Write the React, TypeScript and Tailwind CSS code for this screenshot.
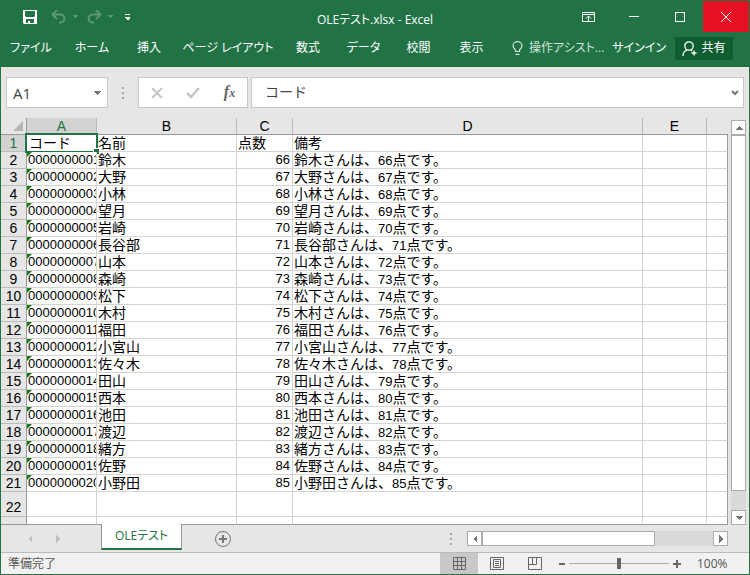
import React from 'react';

const ribbonTabs = [
  { label: 'ファイル', width: 'w-[60px]' },
  { label: 'ホーム', width: 'w-[62px]' },
  { label: '挿入', width: 'w-[52px]' },
  { label: 'ページ レイアウト', width: 'w-[106px]' },
  { label: '数式', width: 'w-[54px]' },
  { label: 'データ', width: 'w-[57px]' },
  { label: '校閲', width: 'w-[53px]' },
  { label: '表示', width: 'w-[53px]' },
];

const names = [
  '鈴木', '大野', '小林', '望月', '岩崎', '長谷部', '山本', '森崎', '松下', '木村',
  '福田', '小宮山', '佐々木', '田山', '西本', '池田', '渡辺', '緒方', '佐野', '小野田',
];

const people = names.map((name, index) => ({
  code: String(index + 1).padStart(10, '0'),
  name,
  score: 66 + index,
}));

const columns = ['A', 'B', 'C', 'D', 'E', ''];

const Triangle: React.FC<{ points: string; className?: string }> = ({ points, className = 'fill-[#777]' }) => (
  <svg width="8" height="8" viewBox="0 0 8 8" className={className} shapeRendering="crispEdges">
    <polygon points={points} />
  </svg>
);

const UP = '4,2 8,6 0,6';
const DOWN = '0,2 8,2 4,6';
const LEFT = '6,0 6,8 2,4';
const RIGHT = '2,0 2,8 6,4';
const SMALL_DOWN = '0,2 6,2 3,5';

const Dots: React.FC = () => (
  <div className="flex flex-col gap-[3px]">
    <span className="size-[2px] bg-[#a6a6a6]" />
    <span className="size-[2px] bg-[#a6a6a6]" />
    <span className="size-[2px] bg-[#a6a6a6]" />
  </div>
);

const QuickAccess: React.FC = () => (
  <div className="flex items-center pl-[22px] text-white">
    <button aria-label="上書き保存" className="mr-[14px]">
      <svg width="14" height="14" viewBox="0 0 14 14" fill="currentColor" fillRule="evenodd">
        <path d="M0 0h14v14H1l-1-1zM2 1V6l1 1h8l1-1V1zM3 9v4h2v-2h2v2h4V9z" />
      </svg>
    </button>
    <button aria-label="元に戻す" className="flex items-center gap-[5px] text-[#5c9776]">
      <svg width="16" height="14" viewBox="0 0 16 14" fill="none" stroke="currentColor" strokeWidth="2">
        <path d="M6 0L1.500 4.500 6 9M2 4.500h7.500a4 4 0 0 1 0 8H8" />
      </svg>
      <Triangle points={SMALL_DOWN} className="fill-current" />
    </button>
    <button aria-label="やり直し" className="ml-[6px] flex items-center gap-[5px] text-[#5c9776]">
      <svg width="16" height="14" viewBox="0 0 16 14" fill="none" stroke="currentColor" strokeWidth="2">
        <path d="M10 0l4.500 4.500L10 9M14 4.500H6.500a4 4 0 0 0 0 8H8" />
      </svg>
      <Triangle points={SMALL_DOWN} className="fill-current" />
    </button>
    <button aria-label="クイック アクセス ツール バーのカスタマイズ" className="ml-[10px]">
      <svg width="6" height="8" viewBox="0 0 6 8" fill="currentColor" shapeRendering="crispEdges">
        <path d="M0 1h5v1H0zM0 4h5v1L3 7H2L0 5z" />
      </svg>
    </button>
  </div>
);

const WindowButtons: React.FC = () => (
  <div className="flex justify-end text-white">
    <button aria-label="リボンの表示オプション" className="flex w-[46px] items-center justify-center">
      <svg width="13" height="10" viewBox="0 0 13 10" fill="none" stroke="currentColor">
        <path d="M.5.500h12v9H.5zM.5 2.500h12M6.500 9V4M4 6.500L6.500 4 9 6.500" />
      </svg>
    </button>
    <button aria-label="最小化" className="flex w-[46px] items-center justify-center">
      <span className="h-px w-[10px] bg-white" />
    </button>
    <button aria-label="最大化" className="flex w-[46px] items-center justify-center">
      <span className="size-[10px] border border-white" />
    </button>
    <button aria-label="閉じる" className="flex w-[46px] items-center justify-center bg-[#e81123]">
      <svg width="10" height="10" viewBox="0 0 10 10" stroke="currentColor">
        <path d="M0 0l10 10M10 0L0 10" />
      </svg>
    </button>
  </div>
);

const Ribbon: React.FC = () => (
  <header className="bg-[#217346] text-[12px] text-white">
    <div className="grid h-[31px] grid-cols-[1fr_auto_1fr]">
      <QuickAccess />
      <h1 className="self-center pt-[6px] leading-4">OLEテスト.xlsx - Excel</h1>
      <WindowButtons />
    </div>
    <div className="flex h-[35px] items-center pb-[3px] whitespace-nowrap">
      <nav className="flex">
        {ribbonTabs.map((tab) => (
          <button key={tab.label} className={`${tab.width} text-center`}>
            {tab.label}
          </button>
        ))}
      </nav>
      <button className="ml-[14px] flex items-center gap-[6px] text-[#d3e3da]">
        <svg width="11" height="14" viewBox="0 0 11 14" fill="none" stroke="currentColor" strokeWidth="1.200">
          <path d="M3.500 10.500V9C2.500 8 1 6.500 1 4.800a4.500 4.200 0 0 1 9 0C10 6.500 8.500 8 7.500 9v1.500zM3.500 13.400h4" />
        </svg>
        操作アシスト...
      </button>
      <button className="ml-auto">サインイン</button>
      <button className="mr-4 ml-[9px] flex h-[23px] w-[58px] items-center justify-center gap-1 bg-[#0e5c2f]">
        <svg width="15" height="15" viewBox="0 0 15 15" fill="none" stroke="currentColor" strokeWidth="1.300">
          <circle cx="7" cy="5" r="4.200" />
          <path d="M1 15c0-3 1.500-5 4-6M9 9l1 1M12 9.500v5M9.500 12h5" />
        </svg>
        共有
      </button>
    </div>
  </header>
);

const FormulaBar: React.FC = () => (
  <div className="flex h-[51px] items-center pr-[5px] pl-[5px] text-[#444]">
    <div className="flex h-[31px] w-[102px] items-center border border-[#c6c6c6] bg-white pr-[6px] pl-[6px]">
      <input
        aria-label="名前ボックス"
        defaultValue="A1"
        className="min-w-0 flex-1 bg-transparent text-[15px] leading-5 outline-none"
      />
      <button aria-label="名前の一覧">
        <Triangle points={DOWN} />
      </button>
    </div>
    <div className="flex w-[30px] justify-center">
      <Dots />
    </div>
    <div className="flex h-[31px] w-[110px] items-center justify-around border border-[#c6c6c6] bg-white">
      <button aria-label="キャンセル">
        <svg width="12" height="12" viewBox="0 0 12 12" stroke="#c6c6c6" strokeWidth="2">
          <path d="M1 1l10 10M11 1L1 11" />
        </svg>
      </button>
      <button aria-label="入力">
        <svg width="14" height="12" viewBox="0 0 14 12" fill="none" stroke="#c6c6c6" strokeWidth="2.500">
          <path d="M1 6l4 4 8-9" />
        </svg>
      </button>
      <button aria-label="関数の挿入" className="font-['Liberation_Serif',serif] text-[16px] leading-5 font-bold italic text-[#666]">
        f<span className="text-[12px]">x</span>
      </button>
    </div>
    <div className="ml-[3px] flex h-[31px] flex-1 items-center border border-[#c6c6c6] bg-white pr-1 pl-[13px]">
      <input
        aria-label="数式バー"
        defaultValue="コード"
        className="min-w-0 flex-1 bg-transparent pb-1 font-['Noto_Sans_CJK_JP',sans-serif] text-[14px] leading-5 outline-none [font-feature-settings:normal]"
      />
      <button aria-label="数式バーの展開">
        <svg width="8" height="6" viewBox="0 0 8 6" fill="none" stroke="#777" strokeWidth="2">
          <path d="M1 1l3 3 3-3" />
        </svg>
      </button>
    </div>
  </div>
);

const cell = 'overflow-hidden border-r border-b border-[#d4d4d4] bg-white p-0';
const rowHead = 'border-r border-b border-r-[#999] border-b-[#bbb] p-0 text-center font-normal';

const EmptyCells: React.FC<{ from?: number }> = ({ from = 0 }) => (
  <>
    {columns.slice(from).map((_, index) => (
      <td key={index} className={`${cell} last:border-r-[#999]`} />
    ))}
  </>
);

const Sheet: React.FC = () => (
  <table className="w-full flex-1 table-fixed border-separate border-spacing-0 font-['Liberation_Sans','Noto_Sans_CJK_JP',sans-serif] text-[14px] leading-4 whitespace-nowrap text-black [font-feature-settings:normal]">
    <colgroup>
      <col className="w-[26px]" />
      <col className="w-[70px]" />
      <col className="w-[140px]" />
      <col className="w-[56px]" />
      <col className="w-[350px]" />
      <col className="w-[64px]" />
      <col />
    </colgroup>
    <thead>
      <tr className="h-[17px]">
        <th className="border-r border-b border-[#999] p-0">
          <svg width="10" height="10" viewBox="0 0 10 10" className="mr-[3px] ml-auto">
            <path d="M10 0v10H0z" fill="#b4b4b4" />
          </svg>
        </th>
        {columns.map((column, index) => (
          <th
            key={index}
            className="border-r border-b border-r-[#bbb] border-b-[#999] p-0 font-normal last:border-r-0 nth-2:bg-[#d2d2d2] nth-2:text-[#217346]"
          >
            {column}
          </th>
        ))}
      </tr>
    </thead>
    <tbody>
      <tr className="h-[17px]">
        <th className={`${rowHead} bg-[#d2d2d2] text-[#217346]`}>1</th>
        <td className="relative border-r border-b border-[#d4d4d4] bg-white p-0 pl-[2px]">
          コード
          <span className="absolute -inset-[2px] border-2 border-[#217346]" />
          <span className="absolute -right-[3px] -bottom-[3px] size-[6px] border-t border-l border-white bg-[#217346]" />
        </td>
        <td className={`${cell} pl-px`}>名前</td>
        <td className={`${cell} pl-px`}>点数</td>
        <td className={`${cell} pl-px`}>備考</td>
        <EmptyCells from={4} />
      </tr>
      {people.map((person, index) => (
        <tr key={person.code} className="h-[17px]">
          <th className={rowHead}>{index + 2}</th>
          <td className={`${cell} relative pl-px text-[13px]`}>
            <span className="absolute top-0 left-0 border-t-[5px] border-r-[5px] border-t-[#107c10] border-r-transparent" />
            {person.code}
          </td>
          <td className={`${cell} pl-px`}>{person.name}</td>
          <td className={`${cell} pr-[2px] text-right text-[13px]`}>{person.score}</td>
          <td className={`${cell} pl-px`}>
            {person.name}さんは、<span className="text-[13px] leading-none">{person.score}</span>点です。
          </td>
          <EmptyCells from={4} />
        </tr>
      ))}
      <tr className="h-[25px]">
        <th className={`${rowHead} pt-[6px]`}>22</th>
        <EmptyCells />
      </tr>
      <tr className="h-[8px]">
        <th className="border-r border-b border-[#999] p-0" />
        {columns.map((_, index) => (
          <td key={index} className="border-r border-b border-r-[#d4d4d4] border-b-[#999] bg-white p-0 last:border-r-[#999]" />
        ))}
      </tr>
    </tbody>
  </table>
);

const scrollButton = 'flex size-[15px] shrink-0 items-center justify-center border border-[#ababab] bg-white';

const VerticalScroll: React.FC = () => (
  <div className="flex w-[21px] flex-col pt-[2px] pl-[3px]">
    <button aria-label="上へスクロール" className={scrollButton}>
      <Triangle points={UP} />
    </button>
    <div className="flex w-[15px] flex-1 flex-col bg-[#dadada]">
      <div className="h-[95%] border border-[#ababab] bg-white" />
    </div>
    <button aria-label="下へスクロール" className={scrollButton}>
      <Triangle points={DOWN} />
    </button>
  </div>
);

const SheetTabs: React.FC = () => (
  <div className="flex h-[27px] text-[12px]">
    <div className="flex w-[100px] items-center gap-5 pl-[25px]">
      <button aria-label="前のシート">
        <Triangle points={LEFT} className="fill-[#c0c0c0]" />
      </button>
      <button aria-label="次のシート">
        <Triangle points={RIGHT} className="fill-[#c0c0c0]" />
      </button>
    </div>
    <button className="-mt-px h-[26px] w-[81px] border-x border-b-2 border-x-[#999] border-b-[#217346] bg-white text-[#217346]">
      OLEテスト
    </button>
    <button aria-label="新しいシート" className="ml-8">
      <svg width="18" height="18" viewBox="0 0 18 18" fill="none" stroke="#777">
        <circle cx="9" cy="9" r="7.500" />
        <path d="M9 5v8M5 9h8" strokeWidth="2" />
      </svg>
    </button>
    <div className="ml-auto flex w-[299px] items-center pr-[21px]">
      <Dots />
      <div className="ml-[15px] flex flex-1">
        <button aria-label="左へスクロール" className={scrollButton}>
          <Triangle points={LEFT} />
        </button>
        <div className="flex-1 bg-[#dadada]">
          <div className="h-[15px] w-3/4 border border-[#ababab] bg-white" />
        </div>
        <button aria-label="右へスクロール" className={scrollButton}>
          <Triangle points={RIGHT} />
        </button>
      </div>
    </div>
  </div>
);

const StatusBar: React.FC = () => (
  <footer className="flex h-[22px] items-stretch border-t border-[#bbb] bg-[#f1f1f1] text-[12px] text-[#555]">
    <span className="self-center pl-[7px]">準備完了</span>
    <div className="ml-auto flex">
      <button aria-label="標準" className="flex w-[38px] items-center justify-center bg-[#c8c8c8]">
        <svg width="13" height="13" viewBox="0 0 13 13" fill="none" stroke="#666">
          <path d="M.5.500h12v12H.5zM4.500.500v12M8.500.500v12M.5 4.500h12M.5 8.500h12" />
        </svg>
      </button>
      <button aria-label="ページ レイアウト" className="flex w-[38px] items-center justify-center">
        <svg width="14" height="13" viewBox="0 0 14 13" fill="none" stroke="#666">
          <path d="M.5.500h13v12H.5zM3.500 2.500h7v8h-7zM5 4.500h4M5 6.500h4M5 8.500h4" />
        </svg>
      </button>
      <button aria-label="改ページ プレビュー" className="flex w-[38px] items-center justify-center">
        <svg width="14" height="13" viewBox="0 0 14 13" fill="none" stroke="#666">
          <path d="M.5.500h13v12H.5zM.5 7.500h8v-7M4.500.500v7" />
        </svg>
      </button>
      <button aria-label="縮小" className="flex w-[15px] items-center justify-center">
        <span className="h-[2px] w-[6px] bg-[#666]" />
      </button>
      <input
        type="range"
        aria-label="ズーム"
        min="0"
        max="200"
        defaultValue="100"
        className="h-full w-[100px] appearance-none bg-[linear-gradient(#ababab,#ababab)] bg-[length:100%_1px] bg-center bg-no-repeat [&::-webkit-slider-thumb]:h-[11px] [&::-webkit-slider-thumb]:w-1 [&::-webkit-slider-thumb]:appearance-none [&::-webkit-slider-thumb]:bg-[#666]"
      />
      <button aria-label="拡大" className="flex w-4 items-center justify-center">
        <svg width="8" height="8" viewBox="0 0 8 8" stroke="#666" strokeWidth="2">
          <path d="M4 0v8M0 4h8" />
        </svg>
      </button>
      <span className="w-[64px] self-center pl-3">100%</span>
    </div>
  </footer>
);

const App: React.FC = () => (
  <div className="border border-[#217346] bg-[#e6e6e6] font-['Open_Sans','Noto_Sans_CJK_JP',sans-serif] [font-feature-settings:'palt']">
    <Ribbon />
    <FormulaBar />
    <main className="flex">
      <Sheet />
      <VerticalScroll />
    </main>
    <SheetTabs />
    <StatusBar />
  </div>
);

export default App;
